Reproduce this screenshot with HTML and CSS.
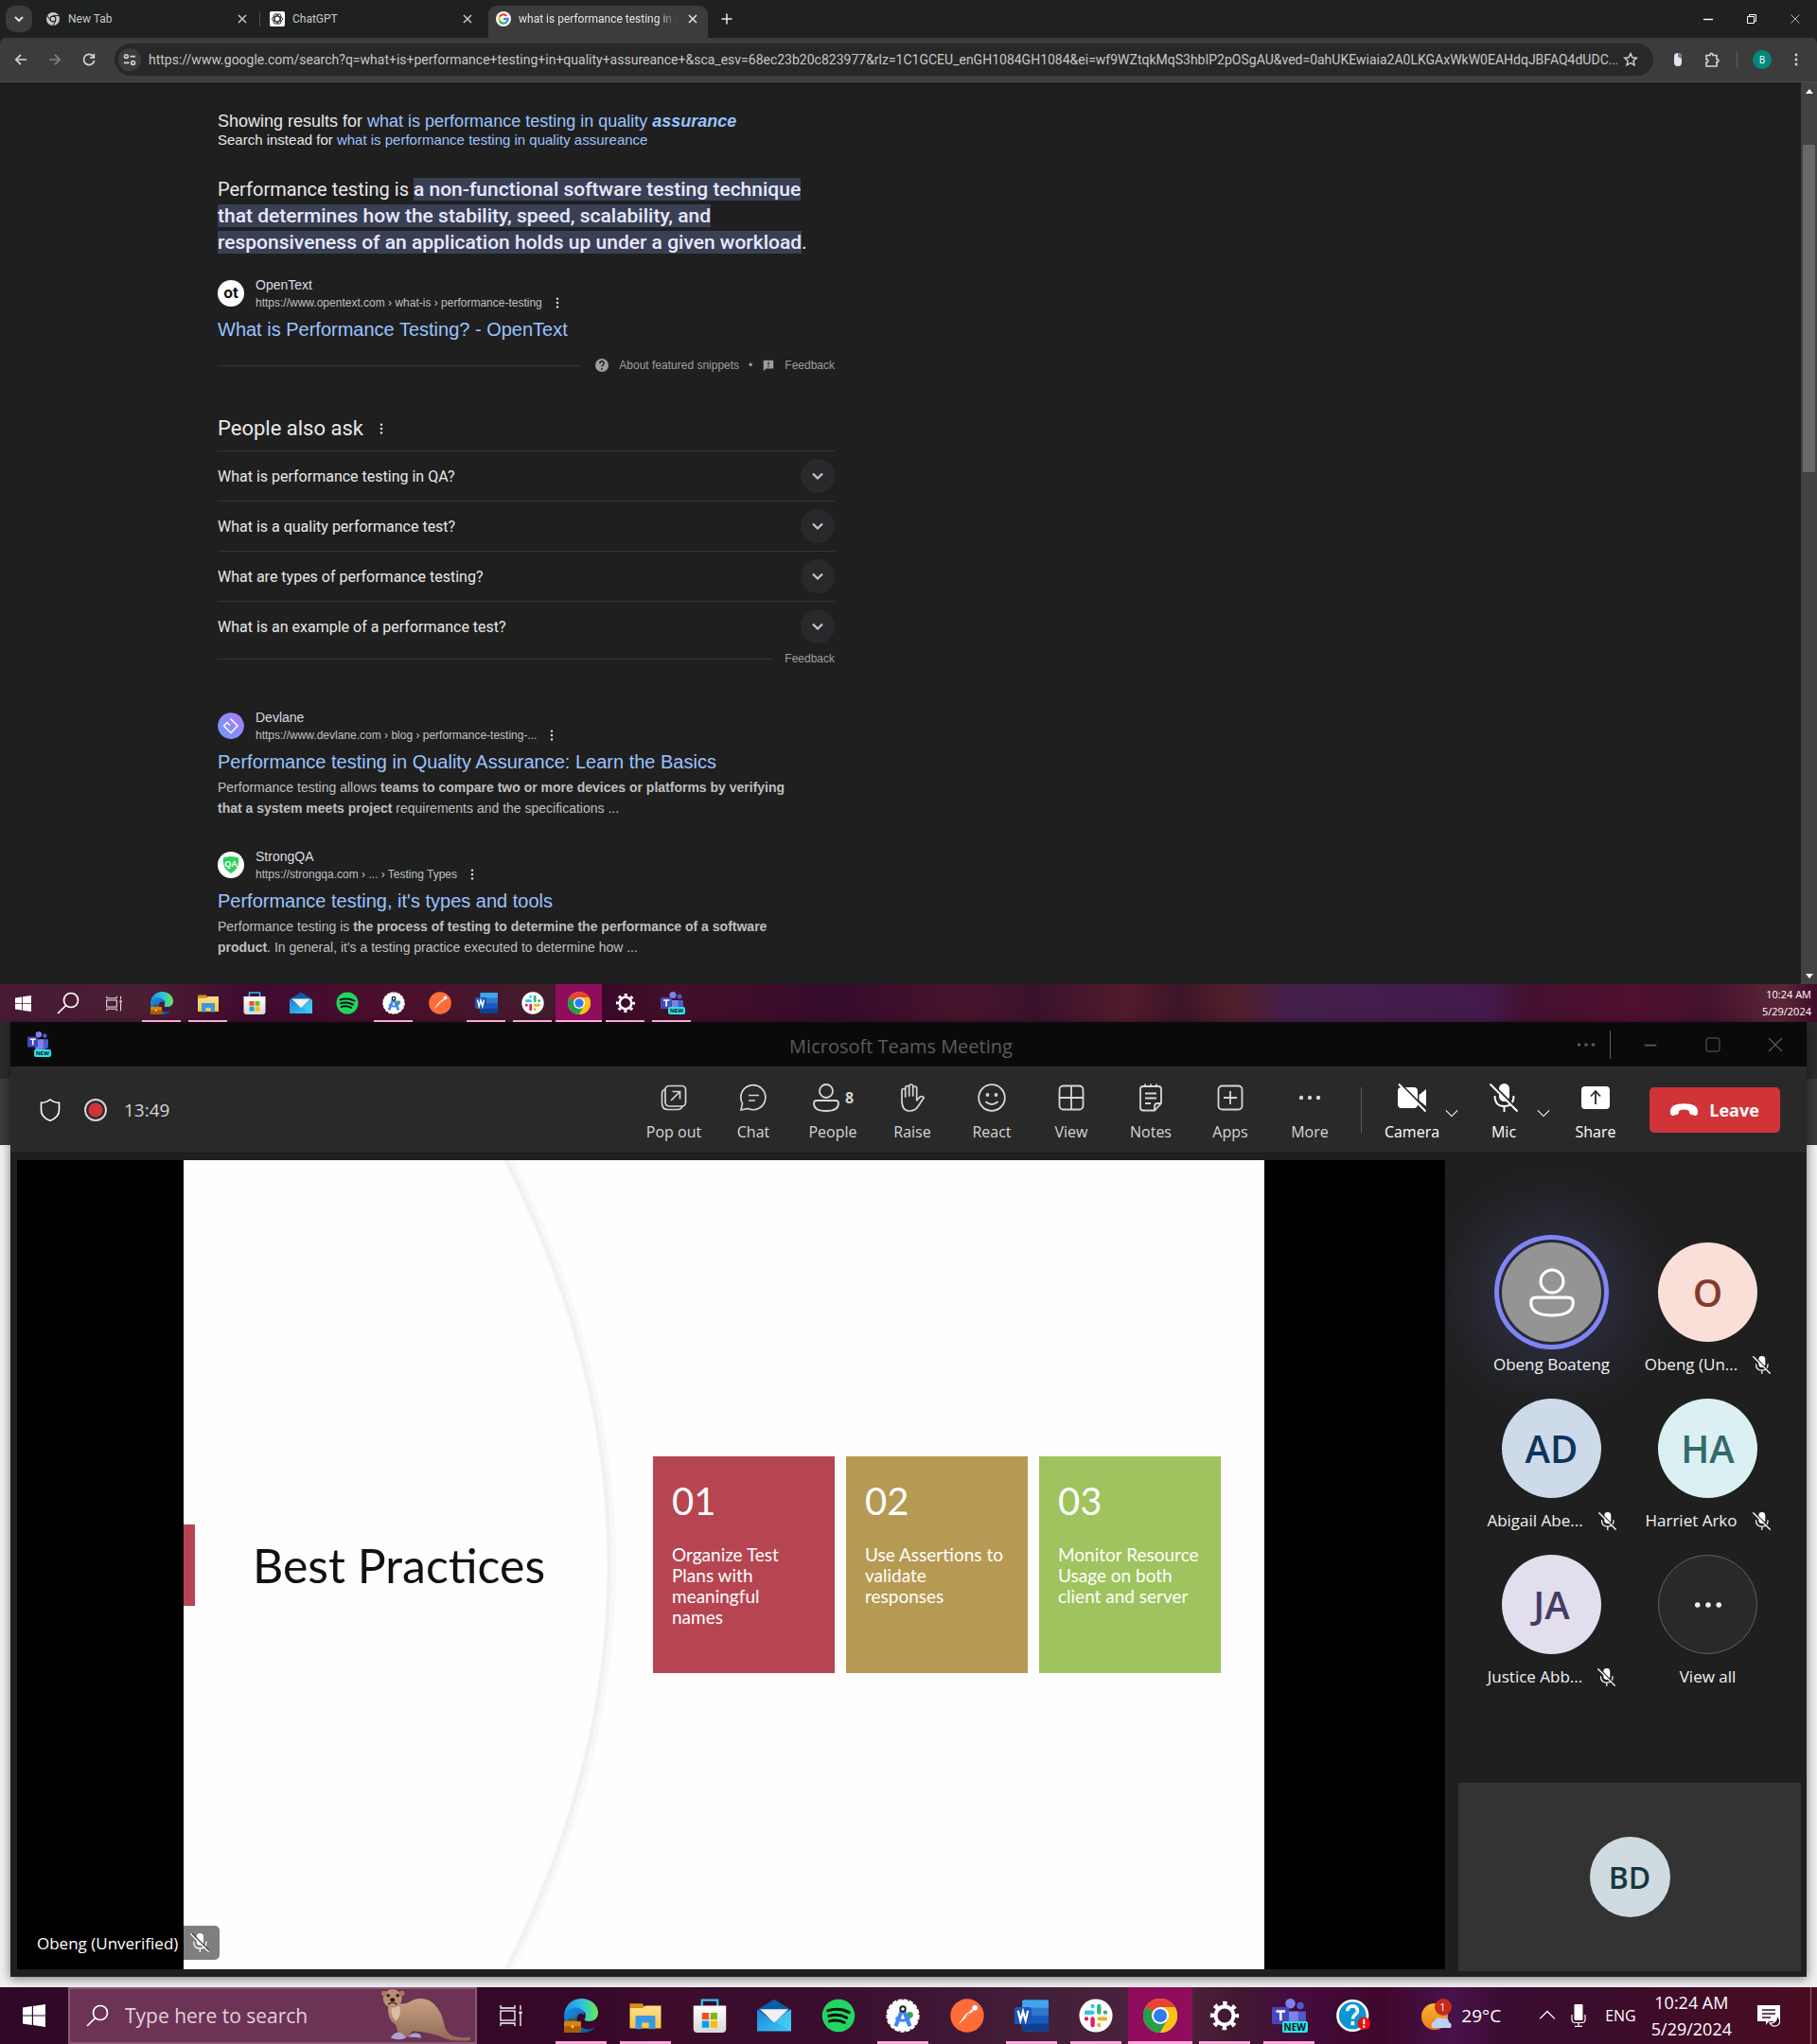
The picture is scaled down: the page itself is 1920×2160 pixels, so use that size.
FILE: index.html
```html
<!DOCTYPE html>
<html lang="en">
<head>
<meta charset="utf-8">
<title>what is performance testing in quality assurance</title>
<link rel="stylesheet" href="styles.css">
</head>
<body>
<svg class="sprite" aria-hidden="true">
  <defs>
    <linearGradient id="g-edge" x1="0" y1="0" x2="1" y2="0"><stop offset="0" stop-color="#1f8fe0"/><stop offset=".55" stop-color="#2fc3dc"/><stop offset="1" stop-color="#6bea4d"/></linearGradient>
    <linearGradient id="g-edge2" x1="0" y1="0" x2="1" y2="1"><stop offset="0" stop-color="#1b8fe4"/><stop offset="1" stop-color="#0d4d93"/></linearGradient>
    <linearGradient id="g-folder" x1="0" y1="0" x2="0" y2="1"><stop offset="0" stop-color="#ffe08a"/><stop offset="1" stop-color="#f7c44a"/></linearGradient>
    <linearGradient id="g-store" x1="0" y1="0" x2="0" y2="1"><stop offset="0" stop-color="#fff"/><stop offset="1" stop-color="#d8d8d8"/></linearGradient>
    <linearGradient id="g-mail" x1="0" y1="0" x2="1" y2="1"><stop offset="0" stop-color="#1b86d8"/><stop offset="1" stop-color="#39c8f5"/></linearGradient>
    <linearGradient id="g-sun" x1="0" y1="0" x2="0" y2="1"><stop offset="0" stop-color="#f7b733"/><stop offset="1" stop-color="#ef7a1a"/></linearGradient>
    <linearGradient id="g-dev" x1="1" y1="0" x2="0" y2="1"><stop offset="0" stop-color="#b077f5"/><stop offset="1" stop-color="#6a9dff"/></linearGradient>
    <linearGradient id="g-otter" x1="0" y1="0" x2="0" y2="1"><stop offset="0" stop-color="#c9a184"/><stop offset="1" stop-color="#8f6a55"/></linearGradient>
  </defs>
  <symbol id="close" viewBox="0 0 16 16"><path d="M4 4l8 8M12 4l-8 8" fill="none" stroke="currentColor" stroke-width="1.5"/></symbol>
  <symbol id="chev" viewBox="0 0 16 16"><path d="M4 6l4 4 4-4" fill="none" stroke="currentColor" stroke-width="1.8"/></symbol>
  <symbol id="chev-thin" viewBox="0 0 16 16"><path d="M1 5l7 7 7-7" fill="none" stroke="currentColor" stroke-width="1.2"/></symbol>
  <symbol id="vdots" viewBox="0 0 16 16"><g fill="currentColor"><circle cx="8" cy="3" r="1.4"/><circle cx="8" cy="8" r="1.4"/><circle cx="8" cy="13" r="1.4"/></g></symbol>
  <symbol id="hdots" viewBox="0 0 24 24"><g fill="currentColor"><circle cx="3" cy="12" r="2.2"/><circle cx="12" cy="12" r="2.2"/><circle cx="21" cy="12" r="2.2"/></g></symbol>
  <symbol id="chrome-grey" viewBox="0 0 16 16"><circle cx="8" cy="8" r="7" fill="#c9c9c9"/><circle cx="8" cy="8" r="3.4" fill="#1f2120"/><circle cx="8" cy="8" r="2.3" fill="#c9c9c9"/><path d="M8 4.6h6.4M5 9.7L1.9 4.2M11 9.7L8 15" stroke="#1f2120" stroke-width="1"/></symbol>
  <symbol id="openai" viewBox="0 0 16 16"><rect width="16" height="16" rx="2" fill="#fff"/><g fill="none" stroke="#333" stroke-width="1"><ellipse cx="8" cy="8" rx="5.6" ry="2.8"/><ellipse cx="8" cy="8" rx="5.6" ry="2.8" transform="rotate(60 8 8)"/><ellipse cx="8" cy="8" rx="5.6" ry="2.8" transform="rotate(120 8 8)"/></g></symbol>
  <symbol id="google" viewBox="0 0 16 16"><circle cx="8" cy="8" r="8" fill="#fff"/><g fill="none" stroke-width="2.3"><path d="M11.3 4.7A4.7 4.7 0 0 0 3.9 5.7" stroke="#ea4335"/><path d="M3.9 5.7a4.7 4.7 0 0 0 0 4.6" stroke="#fbbc05"/><path d="M3.9 10.3a4.7 4.7 0 0 0 7.2 1.2" stroke="#34a853"/><path d="M11.1 11.5A4.7 4.7 0 0 0 12.7 8H8" stroke="#4285f4"/></g></symbol>
  <symbol id="plus" viewBox="0 0 16 16"><path d="M8 2.5v11M2.5 8h11" stroke="currentColor" stroke-width="1.5"/></symbol>
  <symbol id="minus" viewBox="0 0 16 16"><path d="M3 8.5h10" stroke="currentColor" stroke-width="1.4"/></symbol>
  <symbol id="restore" viewBox="0 0 16 16"><path d="M3.5 5.5h7v7h-7zM5.5 5.5v-2h7v7h-2" fill="none" stroke="currentColor"/></symbol>
  <symbol id="square" viewBox="0 0 16 16"><rect x="1" y="1" width="14" height="14" rx="2" fill="none" stroke="currentColor"/></symbol>
  <symbol id="xthin" viewBox="0 0 16 16"><path d="M1 1l14 14M15 1L1 15" stroke="currentColor" stroke-width="1.1"/></symbol>
  <symbol id="back" viewBox="0 0 16 16"><path d="M14 8H3M8 2.8L2.8 8 8 13.2" fill="none" stroke="currentColor" stroke-width="1.7"/></symbol>
  <symbol id="fwd" viewBox="0 0 16 16"><path d="M2 8h11M8 2.8L13.2 8 8 13.2" fill="none" stroke="currentColor" stroke-width="1.7"/></symbol>
  <symbol id="reload" viewBox="0 0 16 16"><path d="M13 5.2A5.6 5.6 0 1 0 13.6 9M13.3 1.8v4.1H9.2" fill="none" stroke="currentColor" stroke-width="1.7"/></symbol>
  <symbol id="tune" viewBox="0 0 16 16"><g fill="none" stroke="currentColor" stroke-width="1.6"><circle cx="4.4" cy="4.6" r="1.9"/><path d="M8.5 4.6h5.5M2 11.4h5.5"/><circle cx="11.6" cy="11.4" r="1.9"/></g></symbol>
  <symbol id="star" viewBox="0 0 16 16"><path d="M8 1.5l1.9 4.3 4.6.4-3.5 3.1 1 4.6L8 11.5l-4 2.4 1-4.6L1.500 6.200l4.600-.4z" fill="none" stroke="currentColor" stroke-width="1.4"/></symbol>
  <symbol id="mouse" viewBox="0 0 16 16"><rect x="4" y="1" width="8" height="14" rx="4" fill="#e4e4ea"/><path d="M8 1a4 4 0 0 1 4 4v2L8 5z" fill="#77779a"/></symbol>
  <symbol id="puzzle" viewBox="0 0 16 16"><path d="M2 3.500h4c-.3-2.800 3.300-2.800 3 0h4v4c2.600-.3 2.600 3.300 0 3v4.500H2v-4c2.400 0 2.400-3.200 0-3.200z" fill="none" stroke="currentColor" stroke-width="1.600"/></symbol>
  <symbol id="help" viewBox="0 0 16 16"><circle cx="8" cy="8" r="7" fill="#9e9e9e"/><path d="M5.800 6.300C5.900 3 10.400 3.200 10.200 6 10 7.700 8 7.800 8 9.600M8 11v1.700" fill="none" stroke="#1f1f1f" stroke-width="1.500"/></symbol>
  <symbol id="flag" viewBox="0 0 16 16"><path d="M2 2h12v10H5l-3 3z" fill="#9e9e9e"/><path d="M8 4v4M8 9v1.500" stroke="#1f1f1f" stroke-width="1.400"/></symbol>
  <symbol id="devlane" viewBox="0 0 28 28"><circle cx="14" cy="14" r="14" fill="url(#g-dev)"/><path d="M13.500 6.500L21 14l-7 7.500L6.500 14l3.500-3.500 3 3" fill="none" stroke="#fff" stroke-width="1.500"/></symbol>
  <symbol id="strong" viewBox="0 0 28 28"><circle cx="14" cy="14" r="14" fill="#fff"/><path d="M6 6.500q8-3 16 0c1 8-2 13-8 16.500C8 19.500 5 14.500 6 6.500z" fill="#2fd158"/></symbol>
  <symbol id="win" viewBox="0 0 24 24"><path d="M0 3.500l9.800-1.400v9.400H0zM11 1.900L24 0v11.500H11zM0 12.600h9.800V22L0 20.600zM11 12.600h13V24l-13-1.900z" fill="#fff"/></symbol>
  <symbol id="mag" viewBox="0 0 24 24"><circle cx="15" cy="9" r="7.500" fill="none" stroke="currentColor" stroke-width="1.700"/><path d="M9.700 14.500L1 23" stroke="currentColor" stroke-width="1.700"/></symbol>
  <symbol id="taskview" viewBox="0 0 24 24"><g fill="none" stroke="#fff" stroke-width="1.300"><rect x="1" y="7" width="15" height="10"/><path d="M1 1v3h15V1M1 23v-3h15v3M22 1v5M22 11v12"/></g><rect x="20.500" y="7.500" width="3" height="3" fill="#fff"/></symbol>
  <symbol id="edge" viewBox="0 0 24 24"><path d="M0 13C0 5.500 5 0 12 0c7 0 12 4.500 12 10 0 4-3 6-6.500 6-2.500 0-3.500-.8-2.800-1.800 1.200-2 .6-5.200-2.700-6.200C7 6.500 2 8.500 0 13z" fill="url(#g-edge)"/><path d="M0 13C1 8 5.500 5.500 10 6.500c3 .8 4.500 3 4 5-1.500-2-5-1-5 3 0 4.500 5 7.500 9 7 2-.2 4-1.500 4.500-2.200C20 23 16.500 24 12.500 24 5 24 0 19 0 13z" fill="url(#g-edge2)"/><rect y="16" width="12" height="8" rx=".8" fill="#d98208"/><path d="M0 19.500h12V24H0z" fill="#a85c05"/><path d="M4 16v-1.500h4V16" fill="none" stroke="#7a3f05"/><rect x="5.200" y="18.700" width="1.600" height="2" fill="#ffd24a"/></symbol>
  <symbol id="folder" viewBox="0 0 24 24"><path d="M1 3.500h9l1.500 3H1z" fill="#d9940b"/><path d="M1 6.500h9l2-1.500h11v16H1z" fill="url(#g-folder)"/><path d="M5 21.500V13q0-1 1-1h12q1 0 1 1v8.500h-4.500V17h-5v4.500z" fill="#3a99dd"/></symbol>
  <symbol id="store" viewBox="0 0 24 24"><path d="M6.500 6V1h11v5" fill="none" stroke="#35c0f5" stroke-width="1.500"/><path d="M.5 5h23v16q0 3-3 3h-17q-3 0-3-3z" fill="url(#g-store)"/><path d="M6.500 10h5v4.800h-5z" fill="#f25022"/><path d="M12.500 10h4.800v4.800h-4.800z" fill="#7fba00"/><path d="M6.500 15.700h5v4.800h-5z" fill="#00a4ef"/><path d="M12.500 15.700h4.800v4.800h-4.800z" fill="#ffb900"/></symbol>
  <symbol id="mail" viewBox="0 0 24 24"><path d="M0 8l12-7.500L24 8v3H0z" fill="#0a5cab"/><path d="M0 7.800l12 8.200 12-8.200V23H0z" fill="url(#g-mail)"/><path d="M24 7.800V23L9 14z" fill="#4fd0f7" opacity=".6"/><path d="M2 7.500h20L12 17z" fill="#f1f1f1"/></symbol>
  <symbol id="spotify" viewBox="0 0 24 24"><circle cx="12" cy="12" r="11.500" fill="#1fd760"/><path d="M4.500 8.500q8-2.500 15 1.200M5 12.300q7-2 12.800 1.200M5.600 15.900q5.600-1.600 10.600 1" fill="none" stroke="#111" stroke-width="2" stroke-linecap="round"/></symbol>
  <symbol id="studio" viewBox="0 0 24 24"><circle cx="12" cy="12" r="11" fill="#fff" stroke="#fff" stroke-width="1.500" stroke-dasharray="3 1"/><circle cx="17" cy="11.500" r="2.200" fill="#34a853"/><path d="M11.500 8L7 19.500M12.500 8L17 19.500" stroke="#4285f4" stroke-width="2.800"/><path d="M7 13.500q5 4 10 0" fill="none" stroke="#4285f4" stroke-width="2"/><circle cx="12" cy="7.300" r="1.800" fill="#fff" stroke="#222" stroke-width="1.300"/></symbol>
  <symbol id="postman" viewBox="0 0 24 24"><circle cx="12" cy="12" r="11.800" fill="#ff6c37"/><path d="M5.500 18.500l5-7 5.500-4.500q1 1.500-.5 2.500l-5 4.500z" fill="#fff"/><circle cx="17.500" cy="6.500" r="1.900" fill="#fff"/><path d="M11 13l3-3" stroke="#ff6c37" stroke-width=".8"/></symbol>
  <symbol id="word" viewBox="0 0 24 24"><rect x="5.500" y="1" width="18.500" height="22" rx="1.200" fill="#2f78d0"/><path d="M5.500 6.500V2.200Q5.500 1 6.700 1h16.100Q24 1 24 2.200v4.300z" fill="#41a5ee"/><path d="M5.500 12H24v5.500H5.500z" fill="#185abd"/><path d="M5.500 17.500H24v4.300q0 1.200-1.200 1.200H6.700q-1.200 0-1.200-1.200z" fill="#103f91"/><rect y="6" width="12" height="12" rx="1.200" fill="#1a56b8"/><path d="M2.500 8.500l1.700 7L6 9l1.800 6.500 1.700-7" fill="none" stroke="#fff" stroke-width="1.500"/></symbol>
  <symbol id="slack" viewBox="0 0 24 24"><circle cx="12" cy="12" r="11.700" fill="#fff"/><g stroke-width="2.900" stroke-linecap="round"><path d="M5.300 9.800h4.400M9.700 5.300v.1" stroke="#36c5f0"/><path d="M14.200 5.300v4.400M18.700 9.700h-.1" stroke="#2eb67d"/><path d="M18.700 14.200h-4.400M14.200 18.700v-.1" stroke="#ecb22e"/><path d="M9.700 18.700v-4.400M5.300 14.200h.1" stroke="#e01e5a"/></g></symbol>
  <symbol id="chrome" viewBox="0 0 24 24"><circle cx="12" cy="12" r="12" fill="#fbc116"/><path d="M12 12L1.600 6A12 12 0 0 1 22.400 6z" fill="#e94335"/><path d="M12 12L1.600 6A12 12 0 0 0 12 24l5-9z" fill="#2a9d48"/><path d="M12 6h10.400A12 12 0 0 1 12 24l5.200-9z" fill="#fbc116"/><circle cx="12" cy="12" r="6" fill="#fff"/><circle cx="12" cy="12" r="4.700" fill="#2f7cf0"/></symbol>
  <symbol id="gear" viewBox="0 0 24 24"><circle cx="12" cy="12" r="6.300" fill="none" stroke="#fff" stroke-width="2.600"/><circle cx="12" cy="12" r="8.600" fill="none" stroke="#fff" stroke-width="3" stroke-dasharray="3 3.754" stroke-dashoffset="1.500"/></symbol>
  <symbol id="teams" viewBox="0 0 24 24"><circle cx="13" cy="3.500" r="3.500" fill="#7b83eb"/><circle cx="20" cy="5" r="2.500" fill="#5059c9"/><path d="M16 9h8v8q-1 5-8 4z" fill="#5059c9"/><path d="M9 9h9.500v9q-1 5-9.500 4z" fill="#7b83eb"/><rect y="6" width="12" height="12" rx="1" fill="#4549bd"/><path d="M3 9h6.400M6.200 9v6.500" stroke="#fff" stroke-width="1.700" fill="none"/></symbol>
  <symbol id="query" viewBox="0 0 24 24"><circle cx="11.500" cy="12" r="10.500" fill="#0a95d6" stroke="#fff" stroke-width="1.800"/><path d="M7.800 8.800C8 4 15.400 4.200 15 8.800c-.3 2.500-3.400 2.500-3.400 5.500M11.600 16v2.800" fill="none" stroke="#fff" stroke-width="2.400"/><circle cx="19.500" cy="17.500" r="4.500" fill="#f00d0d"/><path d="M19.500 14.500v3.600M19.500 19v1.500" stroke="#fff" stroke-width="1.400"/></symbol>
  <symbol id="weather" viewBox="0 0 36 36"><circle cx="15" cy="19" r="14" fill="url(#g-sun)"/><path d="M13 31q-4-5 2-7 2-6 8-3 7-2 7 4 4 1 2 6z" fill="#b9d3f3"/><circle cx="24" cy="9" r="9" fill="#c42b1c"/></symbol>
  <symbol id="mic-tray" viewBox="0 0 16 24"><rect x="3.500" y="0" width="9" height="17" rx="1" fill="#fff"/><path d="M1 11v5q0 3.500 3.500 3.500h7q3.500 0 3.500-3.500v-5M8 19.500V23M4 23.300h8" fill="none" stroke="#fff" stroke-width="1.200"/></symbol>
  <symbol id="notif" viewBox="0 0 24 24"><path d="M0 1h24v17H12l-3 4v-4H0z" fill="#fff"/><path d="M5 6h14M5 10h14M5 14h9" stroke="#3c0c2a" stroke-width="1.300"/><path d="M20 12.500a5.500 5.500 0 1 1-7 7 5.500 5.500 0 0 0 7-7z" fill="#3c0c2a" stroke="#fff" stroke-width="1.200"/></symbol>
  <symbol id="otter" viewBox="0 0 104 62"><path d="M8 20C7 30 10 38 17 42l4 14h10l5-7 12 1 18 4c12 7 26 7 38 6v-4C90 58 78 56 74 44 71 24 60 11 46 11 36 11 32 17 26 17z" fill="url(#g-otter)"/><path d="M12 20c-1 8 0 13 5 17 5-4 6-10 4-17z" fill="#d9bda8"/><circle cx="13" cy="11" r="11" fill="#b88f72"/><circle cx="3" cy="5" r="3" fill="#a67a5f"/><circle cx="24" cy="5" r="3" fill="#a67a5f"/><circle cx="8" cy="7.500" r="2" fill="#3a211b"/><circle cx="19" cy="7.500" r="2" fill="#3a211b"/><ellipse cx="13" cy="12.500" rx="2.800" ry="2.200" fill="#1f1412"/><path d="M8 18q5-5 10 0" fill="none" stroke="#2a1a15" stroke-width="1.300"/><path d="M11 57q5-9 14-5l4 5q-8 4-18 0zM31 56q6-7 14-3l2 4z" fill="#aaa1d2"/></symbol>
  <symbol id="shield" viewBox="0 0 24 24"><path d="M12 1c3 2.500 6 3.300 9.500 3.300V12c0 5-3.500 9-9.500 11.200C6 21 2.500 17 2.500 12V4.300C6 4.300 9 3.500 12 1z" fill="none" stroke="#fff" stroke-width="1.600"/></symbol>
  <symbol id="popout" viewBox="0 0 28 28"><g fill="none" stroke="currentColor" stroke-width="1.700"><rect x="5" y="1.500" width="21.500" height="21.500" rx="4"/><path d="M5 5Q1.500 6 1.500 10v10q0 6.500 6.500 6.500h10q4 0 5-3.500M11 17l9-9M12.500 7.500h8v8"/></g></symbol>
  <symbol id="chat" viewBox="0 0 30 30"><g fill="none" stroke="currentColor" stroke-width="1.700"><path d="M2 28l1.500-7A13 13 0 1 1 9.500 26.500z"/><path d="M10 12.500h11M10 18h7"/></g></symbol>
  <symbol id="person" viewBox="0 0 28 30"><g fill="none" stroke="currentColor" stroke-width="1.800"><circle cx="14" cy="8" r="7"/><path d="M4 18h20q3 0 3 3 0 8-13 8T1 21q0-3 3-3z"/></g></symbol>
  <symbol id="hand" viewBox="0 0 28 30"><path d="M3 18V7.500q0-2 1.800-2t1.900 2V14 4.500q0-2 2-2t2 2V13 3q0-2 2-2t2 2v10-8q0-2 2-2t2 2v13l3.500-4q2.500-1 4 1l-6 9q-3 5-9 5C6 29 3 26 3 18z" fill="none" stroke="currentColor" stroke-width="1.700" stroke-linejoin="round"/></symbol>
  <symbol id="smile" viewBox="0 0 30 30"><circle cx="15" cy="15" r="13.800" fill="none" stroke="currentColor" stroke-width="1.800"/><circle cx="10.500" cy="12" r="1.900" fill="currentColor"/><circle cx="19.500" cy="12" r="1.900" fill="currentColor"/><path d="M9 19.500q6 5 12 0" fill="none" stroke="currentColor" stroke-width="1.800" stroke-linecap="round"/></symbol>
  <symbol id="view" viewBox="0 0 28 28"><g fill="none" stroke="currentColor" stroke-width="1.800"><rect x="1.500" y="1.500" width="25" height="25" rx="4"/><path d="M14 1.500v25M1.500 14h25"/></g></symbol>
  <symbol id="notes" viewBox="0 0 26 30"><g fill="none" stroke="currentColor" stroke-width="1.800"><path d="M5 3h16q3 0 3 3v15l-7 7.500H5q-3 0-3-3V6q0-3 3-3zM24 21h-4q-3 0-3 3v4M7 .5v3M13 .5v3M19 .5v3M7 10.500h12M7 15.500h12M7 21h6"/></g></symbol>
  <symbol id="apps" viewBox="0 0 28 28"><g fill="none" stroke="currentColor" stroke-width="1.800"><rect x="1.500" y="1.500" width="25" height="25" rx="4"/><path d="M14 7v14M7 14h14"/></g></symbol>
  <symbol id="camoff" viewBox="0 0 30 30"><rect y="4" width="21" height="22" rx="4" fill="#fff"/><path d="M22.500 12L30 6v18l-7.500-6z" fill="#fff"/><path d="M2.500 0l29 29" stroke="#292929" stroke-width="2"/><path d="M1 .5l28.500 29" stroke="#fff" stroke-width="2"/></symbol>
  <symbol id="micoff" viewBox="0 0 30 30"><rect x="10" y="0" width="11" height="19" rx="5.500" fill="#fff"/><path d="M5.500 13q0 11 10 11t10-11M15.500 24v6" fill="none" stroke="#fff" stroke-width="1.900"/><path d="M2.500 0l28 28" stroke="#292929" stroke-width="2"/><path d="M.5.500l29 29" stroke="#fff" stroke-width="2"/></symbol>
  <symbol id="share" viewBox="0 0 30 24"><rect width="30" height="24" rx="4" fill="#fff"/><path d="M15 19V6M10 10.500L15 5l5 5.500" fill="none" stroke="#292929" stroke-width="1.800"/></symbol>
  <symbol id="hang" viewBox="0 0 28 14"><path d="M0 9Q0 1 14 1t14 8q0 5-3 4l-4-1q-2-.5-2-4-5-2-10 0 0 3.500-2 4l-4 1Q0 14 0 9z" fill="#fff"/></symbol>
</svg>

<section class="browser">
  <header class="tabs">
    <button class="tab-search" aria-label="Search tabs"><svg class="i16"><use href="#chev"/></svg></button>
    <div class="tab"><svg class="i16"><use href="#chrome-grey"/></svg><span>New Tab</span><button aria-label="Close"><svg class="i16"><use href="#close"/></svg></button></div>
    <div class="tab split"><svg class="i16"><use href="#openai"/></svg><span>ChatGPT</span><button aria-label="Close"><svg class="i16"><use href="#close"/></svg></button></div>
    <div class="tab active"><svg class="i16"><use href="#google"/></svg><span>what is performance testing in q</span><button aria-label="Close"><svg class="i16"><use href="#close"/></svg></button></div>
    <button class="new-tab" aria-label="New tab"><svg class="i16"><use href="#plus"/></svg></button>
    <div class="win-ctl">
      <button aria-label="Minimize"><svg class="i16"><use href="#minus"/></svg></button>
      <button aria-label="Restore"><svg class="i16"><use href="#restore"/></svg></button>
      <button aria-label="Close window"><svg class="i10"><use href="#xthin"/></svg></button>
    </div>
  </header>
  <div class="toolbar">
    <div class="nav">
      <button aria-label="Back"><svg class="i16"><use href="#back"/></svg></button>
      <button class="dim" aria-label="Forward"><svg class="i16"><use href="#fwd"/></svg></button>
      <button aria-label="Reload"><svg class="i16"><use href="#reload"/></svg></button>
    </div>
    <div class="omnibox">
      <button class="site" aria-label="Site information"><svg class="i16"><use href="#tune"/></svg></button>
      <input type="text" aria-label="Address" value="https://www.google.com/search?q=what+is+performance+testing+in+quality+assureance+&amp;sca_esv=68ec23b20c823977&amp;rlz=1C1GCEU_enGH1084GH1084&amp;ei=wf9WZtqkMqS3hbIP2pOSgAU&amp;ved=0ahUKEwiaia2A0LKGAxWkW0EAHdqJBFAQ4dUDC...">
      <button aria-label="Bookmark"><svg class="i16"><use href="#star"/></svg></button>
    </div>
    <div class="exts">
      <button aria-label="Mouse extension"><svg class="i16"><use href="#mouse"/></svg></button>
      <button aria-label="Extensions"><svg class="i16"><use href="#puzzle"/></svg></button>
      <i class="bar"></i>
      <button class="profile">B</button>
      <button aria-label="Menu"><svg class="i16"><use href="#vdots"/></svg></button>
    </div>
  </div>
  <div class="page">
    <main class="results">
      <p class="showing">Showing results for <a href="#">what is performance testing in quality <b><i>assurance</i></b></a></p>
      <p class="instead">Search instead for <a href="#">what is performance testing in quality assureance</a></p>
      <p class="answer">Performance testing is <mark>a non-functional software testing technique</mark><br><mark>that determines how the stability, speed, scalability, and</mark><br><mark>responsiveness of an application holds up under a given workload</mark>.</p>
      <article>
        <div class="source">
          <span class="fav ot">ot</span>
          <div><div class="site-name">OpenText</div><div class="site-url">https://www.opentext.com › what-is › performance-testing <button aria-label="About"><svg class="i14"><use href="#vdots"/></svg></button></div></div>
        </div>
        <h3><a href="#">What is Performance Testing? - OpenText</a></h3>
      </article>
      <div class="rule about"><hr><svg class="i16"><use href="#help"/></svg><a href="#">About featured snippets</a><span>•</span><svg class="i14"><use href="#flag"/></svg><a href="#">Feedback</a></div>
      <section class="paa">
        <h2>People also ask <button aria-label="About"><svg class="i14"><use href="#vdots"/></svg></button></h2>
        <button class="q">What is performance testing in QA?<span><svg class="i20"><use href="#chev"/></svg></span></button>
        <button class="q">What is a quality performance test?<span><svg class="i20"><use href="#chev"/></svg></span></button>
        <button class="q">What are types of performance testing?<span><svg class="i20"><use href="#chev"/></svg></span></button>
        <button class="q">What is an example of a performance test?<span><svg class="i20"><use href="#chev"/></svg></span></button>
        <div class="rule"><hr><a href="#">Feedback</a></div>
      </section>
      <article class="hit">
        <div class="source">
          <svg class="fav"><use href="#devlane"/></svg>
          <div><div class="site-name">Devlane</div><div class="site-url">https://www.devlane.com › blog › performance-testing-... <button aria-label="About"><svg class="i14"><use href="#vdots"/></svg></button></div></div>
        </div>
        <h3><a href="#">Performance testing in Quality Assurance: Learn the Basics</a></h3>
        <p>Performance testing allows <b>teams to compare two or more devices or platforms by verifying<br>that a system meets project</b> requirements and the specifications ...</p>
      </article>
      <article class="hit">
        <div class="source">
          <span class="fav strong"><svg><use href="#strong"/></svg><b>QA</b></span>
          <div><div class="site-name">StrongQA</div><div class="site-url">https://strongqa.com › ... › Testing Types <button aria-label="About"><svg class="i14"><use href="#vdots"/></svg></button></div></div>
        </div>
        <h3><a href="#">Performance testing, it's types and tools</a></h3>
        <p>Performance testing is <b>the process of testing to determine the performance of a software<br>product</b>. In general, it's a testing practice executed to determine how ...</p>
      </article>
    </main>
    <div class="scrollbar"><i class="up"></i><i class="thumb"></i><i class="down"></i></div>
  </div>
</section>

<nav class="taskbar small" aria-label="Upper taskbar">
  <button class="sys" aria-label="Start"><svg class="start"><use href="#win"/></svg></button>
  <button class="sys" aria-label="Search"><svg><use href="#mag"/></svg></button>
  <button class="sys" aria-label="Task view"><svg class="start"><use href="#taskview"/></svg></button>
  <div class="apps">
    <button class="run" aria-label="Edge"><svg><use href="#edge"/></svg></button>
    <button class="run" aria-label="Explorer"><svg><use href="#folder"/></svg></button>
    <button aria-label="Store"><svg><use href="#store"/></svg></button>
    <button aria-label="Mail"><svg><use href="#mail"/></svg></button>
    <button aria-label="Spotify"><svg><use href="#spotify"/></svg></button>
    <button class="run" aria-label="Android Studio"><svg><use href="#studio"/></svg></button>
    <button aria-label="Postman"><svg><use href="#postman"/></svg></button>
    <button class="run" aria-label="Word"><svg><use href="#word"/></svg></button>
    <button class="run" aria-label="Slack"><svg><use href="#slack"/></svg></button>
    <button class="run on" aria-label="Chrome"><svg><use href="#chrome"/></svg></button>
    <button class="run" aria-label="Settings"><svg><use href="#gear"/></svg></button>
    <button class="run" aria-label="Teams"><svg><use href="#teams"/></svg><em>NEW</em></button>
  </div>
  <div class="clock"><span>10:24 AM</span><span>5/29/2024</span></div>
</nav>

<section class="desktop">
  <div class="meeting">
    <header class="titlebar">
      <span class="logo"><svg><use href="#teams"/></svg><em>NEW</em></span>
      <h1>Microsoft Teams Meeting</h1>
      <div class="ctl">
        <button aria-label="More"><svg class="i20"><use href="#hdots"/></svg></button><i class="bar"></i>
        <button aria-label="Minimize"><svg class="i20"><use href="#minus"/></svg></button>
        <button aria-label="Maximize"><svg class="i16"><use href="#square"/></svg></button>
        <button aria-label="Close"><svg class="i16"><use href="#xthin"/></svg></button>
      </div>
    </header>
    <div class="controls">
      <div class="status"><svg><use href="#shield"/></svg><i class="rec"></i><span>13:49</span></div>
      <div class="acts">
        <button><span><svg class="sq"><use href="#popout"/></svg></span>Pop out</button>
        <button><span><svg><use href="#chat"/></svg></span>Chat</button>
        <button><span><svg><use href="#person"/></svg><b>8</b></span>People</button>
        <button><span><svg><use href="#hand"/></svg></span>Raise</button>
        <button><span><svg><use href="#smile"/></svg></span>React</button>
        <button><span><svg class="sq"><use href="#view"/></svg></span>View</button>
        <button><span><svg><use href="#notes"/></svg></span>Notes</button>
        <button><span><svg class="sq"><use href="#apps"/></svg></span>Apps</button>
        <button><span><svg class="i24"><use href="#hdots"/></svg></span>More</button>
      </div>
      <i class="bar"></i>
      <div class="devices">
        <button><span><svg><use href="#camoff"/></svg></span>Camera</button>
        <button class="drop" aria-label="Camera options"><svg class="i14"><use href="#chev-thin"/></svg></button>
        <button><span><svg><use href="#micoff"/></svg></span>Mic</button>
        <button class="drop" aria-label="Mic options"><svg class="i14"><use href="#chev-thin"/></svg></button>
        <button><span><svg><use href="#share"/></svg></span>Share</button>
      </div>
      <button class="leave"><svg><use href="#hang"/></svg>Leave</button>
    </div>
    <div class="room">
      <div class="stage">
        <div class="slide">
          <svg class="arc" viewBox="0 0 1142 855" preserveAspectRatio="none"><path d="M340 -6Q564 428 340 862" fill="none" stroke="#f8f8f8" stroke-width="10"/><path d="M338 -6Q562 428 338 862" fill="none" stroke="#f1f1f1" stroke-width="4"/></svg>
          <h2>Best Practices</h2>
          <div class="cards">
            <section class="c1"><strong>01</strong><p>Organize Test<br>Plans with<br>meaningful<br>names</p></section>
            <section class="c2"><strong>02</strong><p>Use Assertions to<br>validate<br>responses</p></section>
            <section class="c3"><strong>03</strong><p>Monitor Resource<br>Usage on both<br>client and server</p></section>
          </div>
        </div>
        <div class="presenter">Obeng (Unverified)<svg><use href="#micoff"/></svg></div>
      </div>
      <aside class="people">
        <div class="grid">
          <div class="p"><span class="av me"><svg><use href="#person"/></svg></span><span class="name">Obeng Boateng</span></div>
          <div class="p"><span class="av a1">O</span><span class="name">Obeng (Un...<svg><use href="#micoff"/></svg></span></div>
          <div class="p"><span class="av a2">AD</span><span class="name">Abigail Abe...<svg><use href="#micoff"/></svg></span></div>
          <div class="p"><span class="av a3">HA</span><span class="name">Harriet Arko<svg><use href="#micoff"/></svg></span></div>
          <div class="p"><span class="av a4">JA</span><span class="name">Justice Abb...<svg><use href="#micoff"/></svg></span></div>
          <button class="p"><span class="av all"><svg><use href="#hdots"/></svg></span><span class="name">View all</span></button>
        </div>
        <div class="self"><span>BD</span></div>
      </aside>
    </div>
  </div>
</section>

<nav class="taskbar large" aria-label="Lower taskbar">
  <button class="sys" aria-label="Start"><svg><use href="#win"/></svg></button>
  <label class="search"><svg><use href="#mag"/></svg><input type="text" placeholder="Type here to search" aria-label="Type here to search"><svg class="otter"><use href="#otter"/></svg></label>
  <button class="sys" aria-label="Task view"><svg><use href="#taskview"/></svg></button>
  <div class="apps">
    <button class="run" aria-label="Edge"><svg><use href="#edge"/></svg></button>
    <button class="run" aria-label="Explorer"><svg><use href="#folder"/></svg></button>
    <button aria-label="Store"><svg><use href="#store"/></svg></button>
    <button aria-label="Mail"><svg><use href="#mail"/></svg></button>
    <button aria-label="Spotify"><svg><use href="#spotify"/></svg></button>
    <button class="run" aria-label="Android Studio"><svg><use href="#studio"/></svg></button>
    <button aria-label="Postman"><svg><use href="#postman"/></svg></button>
    <button class="run" aria-label="Word"><svg><use href="#word"/></svg></button>
    <button class="run" aria-label="Slack"><svg><use href="#slack"/></svg></button>
    <button class="run on" aria-label="Chrome"><svg><use href="#chrome"/></svg></button>
    <button class="run" aria-label="Settings"><svg><use href="#gear"/></svg></button>
    <button class="run" aria-label="Teams"><svg><use href="#teams"/></svg><em>NEW</em></button>
    <button aria-label="Get help"><svg><use href="#query"/></svg></button>
  </div>
  <div class="tray">
    <button class="weather"><span><svg><use href="#weather"/></svg><b>1</b></span>29°C</button>
    <button class="up" aria-label="Hidden icons"><svg><use href="#chev-thin"/></svg></button>
    <button aria-label="Microphone"><svg class="mic"><use href="#mic-tray"/></svg></button>
    <button class="lang">ENG</button>
    <div class="clock"><span>10:24 AM</span><span>5/29/2024</span></div>
    <button class="notif" aria-label="Notifications"><svg><use href="#notif"/></svg></button>
  </div>
</nav>
</body>
</html>
```
FILE: styles.css
```css
* { box-sizing: border-box; }
body { margin: 0; min-height: 100vh; display: flex; flex-direction: column; background: #f0f0f0; color: #e8e8e8; font-family: "Open Sans", sans-serif; }
button { border: 0; padding: 0; margin: 0; background: none; color: inherit; font: inherit; display: flex; align-items: center; justify-content: center; }
p, h1, h2, h3 { margin: 0; font-weight: 400; }
svg { display: block; flex: none; }
em { font-style: normal; }
.sprite { position: absolute; width: 0; height: 0; }
.i10 { width: 10px; height: 10px; }
.i14 { width: 14px; height: 14px; }
.i16 { width: 16px; height: 16px; }
.i20 { width: 20px; height: 20px; }
.i24 { width: 24px; height: 24px; }
.bar { flex: none; width: 1px; background: #5e5e5e; }

/* Browser */
.browser { background: #1f1f1f; }
.tabs { height: 40px; background: #1f2120; display: flex; align-items: center; padding-left: 6px; font: 12px Roboto, sans-serif; }
.tab-search { width: 28px; height: 28px; border-radius: 10px; background: #3c3c3c; }
.tab { width: 240px; display: flex; align-items: center; gap: 8px; padding: 0 10px 0 14px; color: #c9c9c9; }
.tab span { flex: 1; overflow: hidden; white-space: nowrap; }
.tab.split { padding: 0 12px 0 10px; border-left: 1px solid #4a4a4a; height: 16px; }
.tab.active { width: 232px; height: 34px; align-self: flex-end; padding: 0 8px 6px; margin-left: 2px; background: #3c3c3c; color: #e6e6e6; border-radius: 9px 9px 0 0; }
.tab.active span { -webkit-mask-image: linear-gradient(90deg, #000 88%, transparent); mask-image: linear-gradient(90deg, #000 88%, transparent); }
.new-tab { width: 40px; height: 28px; }
.win-ctl { margin-left: auto; display: flex; color: #fff; }
.win-ctl button { width: 46px; height: 40px; }
.toolbar { height: 47px; background: #3c3c3c; border-bottom: 1px solid #4b4b4b; border-radius: 6px 6px 0 0; display: flex; align-items: center; color: #d5d5d5; }
.nav { display: flex; padding: 0 9px 0 4px; }
.nav button { width: 36px; height: 36px; }
.dim { color: #808080; }
.omnibox { flex: 1; height: 34px; border-radius: 17px; background: #282828; display: flex; align-items: center; padding: 0 16px 0 4px; }
.site { width: 24px; height: 24px; border-radius: 50%; background: #3c3c3c; }
.omnibox input { flex: 1; min-width: 0; border: 0; padding: 0 6px 0 8px; background: none; color: #c7c7c7; font: 14px Roboto, sans-serif; }
.exts { display: flex; align-items: center; padding: 0 4px 0 8px; }
.exts button { width: 36px; height: 28px; }
.exts .bar { height: 16px; margin: 0 8px; }
.exts .profile { width: 20px; height: 20px; border-radius: 50%; background: #00897b; color: #fff; font-size: 10px; margin: 0 8px; }

.page { display: flex; }
.results { flex: 1; padding: 30px 0 28px 230px; font-family: "Liberation Sans", Arial, sans-serif; }
.results > * { width: 652px; }
a { color: #99c3ff; text-decoration: none; }
.showing { font-size: 18px; line-height: 22px; }
.instead { font-size: 15px; line-height: 18px; }
.answer { margin-top: 29px; font: 20px/28px Roboto, sans-serif; white-space: nowrap; }
mark { background: #394054; color: #e8e8ff; font-size: 21px; font-weight: 500; }
article { margin-top: 21px; }
.source { display: flex; gap: 12px; align-items: center; }
.fav { width: 28px; height: 28px; border-radius: 50%; }
.ot { background: #fff; color: #111; font: 700 16px/26px Inter, sans-serif; text-align: center; }
.strong { display: grid; place-items: center; }
.strong > * { grid-area: 1 / 1; width: 28px; height: 28px; }
.strong b { color: #fff; font-size: 9px; line-height: 26px; text-align: center; z-index: 1; }
.site-name { font-size: 14px; line-height: 20px; }
.site-url { font-size: 12px; line-height: 18px; color: #bdc1c6; display: flex; align-items: center; gap: 9px; white-space: nowrap; }
.source, .site-url button { color: #dadce0; }
h3 { font-size: 20px; line-height: 26px; margin-top: 6px; }
article p { font-size: 14px; line-height: 22px; color: #bfbfbf; margin-top: 3px; }
.rule { display: flex; align-items: center; gap: 14px; font-size: 12px; line-height: 16px; color: #9e9e9e; }
.rule a { color: #9e9e9e; }
.rule hr { flex: 1; border: 0; height: 1px; background: #333537; margin: 0; }
.about { gap: 10px; margin-top: 17px; }
.about hr { margin-right: 4px; }
.paa { margin-top: 44px; }
.paa h2 { height: 38px; display: flex; align-items: center; gap: 12px; padding-bottom: 8px; font: 22px/30px Roboto, sans-serif; color: #e8e8e8; }
.q { width: 100%; height: 53px; justify-content: space-between; border-top: 1px solid #333537; font: 16px Roboto, sans-serif; }
.q span { width: 36px; height: 36px; border-radius: 50%; background: #28292a; color: #c4c7d0; display: flex; align-items: center; justify-content: center; }
.hit { margin-top: 44px; }
.hit + .hit { margin-top: 30px; }
.scrollbar { width: 17px; background: #424242; display: flex; flex-direction: column; align-items: center; padding: 7px 0 6px; }
.up, .down { border: 4px solid transparent; border-top: 0; border-bottom: 5px solid #fff; }
.down { border-bottom: 0; border-top: 5px solid #fff; margin-top: auto; }
.thumb { width: 13px; height: 346px; margin-top: 54px; background: #686868; }

/* Taskbars */
.taskbar { display: flex; color: #fff; }
.taskbar.small { height: 40px; background: linear-gradient(90deg, #481a35, #4a1e33 8%, #400a30 14%, #4b0f2c 22%, #431c2c 30%, #38092b 33%, #441028 37%, #360b2c 46%, #46142c 53%, #3a122c 57%, #521b2d 62%, #3c1428 65%, #52202c 68%, #44204c 71%, #431a4b 82%, #431030 84%, #500f2e 90%, #43122c 94%, #5c2639 98%, #3f0d28); }
.taskbar.large { height: 60px; background: linear-gradient(90deg, #2f0828, #350828 27%, #37082a 33%, #3d0c2b 36%, #3a0c2e 45%, #44203a 58%, #50223f 65%, #401830 68%, #450c3e 71%, #3e082c 76%, #48124b 80%, #3a0c30 83%, #3c0c2a 90%, #4b0c22); }
.sys { width: 48px; }
.small svg { width: 24px; height: 24px; }
.small .start { width: 17px; height: 17px; }
.small .apps { margin-left: 2px; }
.apps { display: flex; }
.apps button { position: relative; width: 49px; }
.apps .run::after { content: ""; position: absolute; bottom: 0; left: 4px; right: 4px; height: 2px; background: #ffa6d9; }
.apps .on { background: #8f0d5c; }
.apps .on::after { left: 0; right: 0; }
.apps em, .logo em { position: absolute; right: 10px; bottom: 8px; padding: 0 2px; border-radius: 2px; background: #29e5e5; color: #111; font: 700 6px/8px "Open Sans", sans-serif; }
.clock { display: flex; flex-direction: column; justify-content: center; text-align: center; }
.small .clock { margin-left: auto; padding-right: 6px; font-size: 11px; line-height: 18px; text-align: right; }
.large .sys { width: 72px; }
.large svg { width: 24px; height: 24px; }
.large .apps { margin-left: 4px; }
.large .apps button { width: 68px; }
.large .apps svg { width: 36px; height: 36px; }
.large .apps .run::after { left: 7px; right: 7px; height: 3px; }
.large .apps .on::after { left: 0; right: 0; }
.large .apps em { right: 14px; bottom: 12px; font-size: 10px; line-height: 12px; }
.search { width: 432px; display: flex; align-items: center; padding-left: 17px; background: #6c3355; border: 2px solid #8b5677; }
.search input { flex: 1; min-width: 0; border: 0; padding: 0 0 0 17px; background: none; color: #fff; font: 21px "Open Sans", sans-serif; }
.search input::placeholder { color: #e0d2da; opacity: 1; }
.search .otter { width: 104px; height: 56px; }
.tray { margin-left: auto; margin-right: 6px; padding-right: 32px; border-right: 1px solid #8a6478; display: flex; align-items: center; gap: 16px; font-size: 16px; }
.weather { gap: 7px; font-size: 19px; }
.weather span { position: relative; }
.large .weather svg { width: 36px; height: 36px; }
.weather b { position: absolute; left: 20px; top: 1px; font-size: 11px; line-height: 16px; font-weight: 400; }
.large .up { border: 0; margin: 0 0 0 24px; transform: rotate(180deg); }
.large .up svg { width: 18px; height: 18px; }
.large .mic { width: 16px; }
.lang { margin-left: 4px; }
.large .clock { font-size: 18px; line-height: 28px; }
.notif { padding-left: 11px; }

/* Meeting window */
.desktop { flex: 1; display: flex; padding: 0 11px 11px; background: linear-gradient(#2b2b2b 60px, #3b3b3b 60px 130px, #f0f0f0 130px); }
.meeting { flex: 1; display: flex; flex-direction: column; background: #1f1f1f; box-shadow: 0 2px 10px rgba(0, 0, 0, .5); min-width: 0; }
.titlebar { height: 47px; background: #0a0a0a; display: grid; grid-template-columns: 1fr auto 1fr; align-items: center; padding: 0 16px 0 18px; color: #5c5c5c; }
.titlebar h1 { font-size: 20px; line-height: 28px; padding: 4px 18px 0 0; }
.logo { position: relative; width: 26px; height: 28px; }
.logo svg { width: 22px; height: 22px; }
.logo em { right: 1px; bottom: 1px; }
.ctl { display: flex; align-items: center; justify-content: flex-end; }
.ctl button { width: 66px; height: 30px; }
.ctl button:first-child { width: 50px; }
.ctl .bar { height: 30px; margin-right: 9px; }
.ctl button:last-child { width: 66px; margin-right: -16px; }
.controls { height: 92px; background: #292929; border-bottom: 1px solid #191919; display: flex; align-items: center; padding: 0 28px 0 30px; color: #d6d6d6; font-size: 16px; }
.status { display: flex; align-items: center; gap: 24px; font-size: 19px; margin-right: auto; }
.status svg { width: 24px; height: 24px; }
.rec { width: 24px; height: 24px; border-radius: 50%; border: 2px solid #d6d6d6; background: radial-gradient(#d13438 0 7px, #292929 8px); }
.status span { margin-left: -6px; }
.acts, .devices { display: flex; }
.acts button, .devices button { flex-direction: column; width: 84px; gap: 10px; line-height: 22px; padding-top: 6px; }
.acts span, .devices span { height: 30px; display: flex; align-items: center; gap: 5px; }
.acts svg, .devices span svg { width: 30px; height: 30px; }
.acts .sq { width: 28px; height: 28px; }
.acts .i24 { width: 24px; height: 24px; }
.controls .bar { height: 48px; margin: 0 20px 0 12px; }
.devices { color: #fff; margin-right: 24px; }
.devices button { width: 66px; }
.devices .drop { width: 18px; margin-right: 13px; }
.leave { width: 138px; height: 48px; border-radius: 5px; background: #d13438; color: #fff; font-size: 18px; font-weight: 700; gap: 12px; }
.leave svg { width: 29px; height: 15px; }
.room { flex: 1; display: flex; padding: 7px 6px 6px 7px; min-height: 700px; }
.stage { flex: 1; position: relative; background: #000; display: flex; justify-content: center; padding: 0 191px 0 176px; margin-bottom: 2px; }
.slide { flex: 1; position: relative; background: #fefefe; display: grid; grid-template-columns: 496fr 600fr 46fr; align-items: center; color: #fff; font-family: Lato, sans-serif; }
.arc { position: absolute; inset: 0; width: 100%; height: 100%; }
.slide h2 { position: relative; color: #111; font-size: 50px; line-height: 86px; padding-left: 61px; border-left: 12px solid #b64551; }
.cards { position: relative; display: grid; grid-template-columns: 1fr 1fr 1fr; gap: 12px; }
.cards section { height: 229px; padding: 22px 20px; font-size: 19px; line-height: 22px; white-space: nowrap; }
.cards strong { display: block; font-size: 40px; line-height: 50px; font-weight: 400; margin-bottom: 21px; }
.c1 { background: #b64551; }
.c2 { background: #b69953; }
.c3 { background: #9fc35e; }
.presenter { position: absolute; left: 10px; bottom: 10px; height: 36px; display: flex; align-items: center; gap: 13px; padding: 0 11px; border-radius: 5px; background: rgba(0, 0, 0, .5); color: #fff; font-size: 17px; }
.presenter svg { width: 20px; height: 20px; }
.people { width: 376px; padding-left: 14px; display: flex; flex-direction: column; justify-content: space-between; color: #f2f2f2; }
.grid { display: grid; grid-template-columns: 165px 165px; justify-content: center; row-gap: 24px; padding-top: 87px; }
.p { display: flex; flex-direction: column; align-items: center; gap: 12px; font-size: 17px; line-height: 24px; white-space: nowrap; }
.av { width: 105px; height: 105px; border-radius: 50%; display: flex; align-items: center; justify-content: center; font-size: 40px; font-weight: 600; }
.me { background: #949494; color: #fff; box-shadow: 0 0 0 3px #292938, 0 0 0 8px #7f85f5, 0 0 90px 20px rgba(127, 133, 245, .25); }
.me svg { width: 48px; height: 52px; }
.a1 { background: #fadfd9; color: #843a2c; }
.a2 { background: #cddaea; color: #10335c; }
.a3 { background: #dbf0f3; color: #34696c; }
.a4 { background: #e2deee; color: #453c64; }
.all { background: #292929; border: 1px solid #616161; }
.all svg { width: 30px; height: 30px; }
.name { display: flex; align-items: center; gap: 16px; }
.name svg { width: 19px; height: 19px; }
.self { height: 199px; background: #333; display: flex; align-items: center; justify-content: center; }
.self span { width: 85px; height: 85px; border-radius: 50%; background: #cfdbe1; color: #14373d; font-size: 32px; line-height: 85px; font-weight: 600; text-align: center; }
```
